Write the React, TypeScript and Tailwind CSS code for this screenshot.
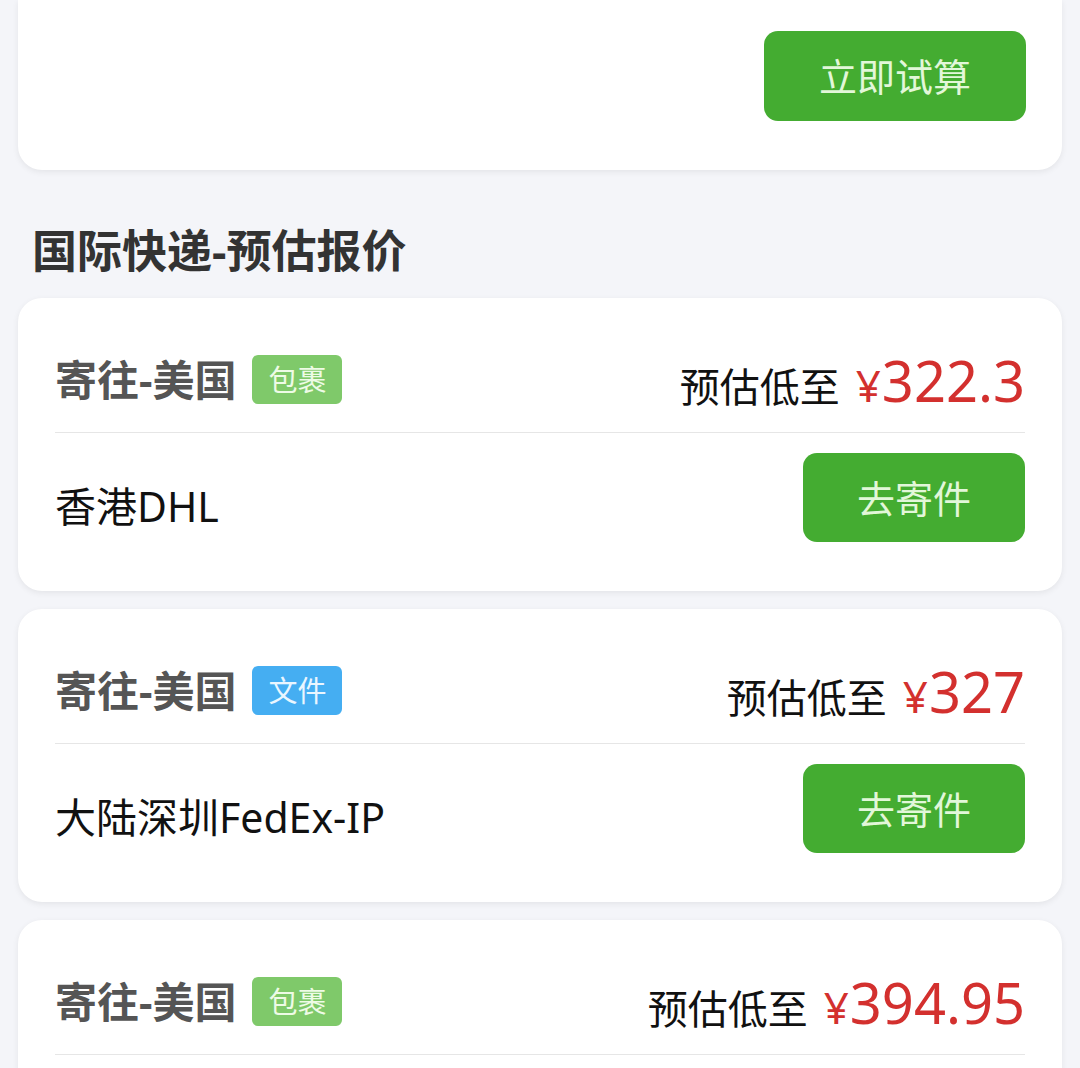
import React from "react";

const FONT = { fontFamily: '"Noto Sans", "Noto Sans CJK SC", sans-serif' };

type Quote = {
  tag: string;
  tagClass: string;
  price: string;
  carrier?: string;
};

const quotes: Quote[] = [
  { tag: "包裹", tagClass: "bg-[#7fc96a] text-[#eefbe6]", price: "322.3", carrier: "香港DHL" },
  { tag: "文件", tagClass: "bg-[#45aef2] text-[#eaf6ff]", price: "327", carrier: "大陆深圳FedEx-IP" },
  { tag: "包裹", tagClass: "bg-[#7fc96a] text-[#eefbe6]", price: "394.95" },
];

function QuoteCard({ q }: { q: Quote }) {
  return (
    <div className="mx-[18px] rounded-[24px] bg-white px-[37px] pt-[29px] pb-[49px] shadow-[0_2px_6px_rgba(0,0,0,0.07)]">
      <div className="flex h-[106px] items-center justify-between border-b border-[#e6e6e6]">
        <div className="flex items-center gap-[16px]">
          <span className="text-[42px] font-bold leading-none text-[#555555]">寄往-美国</span>
          <span className={`flex h-[49px] w-[90px] items-center justify-center rounded-[6px] text-[29px] leading-none ${q.tagClass}`}>
            {q.tag}
          </span>
        </div>
        <div className="flex items-baseline leading-none">
          <span className="text-[40px] text-[#111111]">预估低至</span>
          <span className="ml-[16px] mr-[1px] text-[44px] text-[#d3302e]">¥</span>
          <span className="text-[56px] text-[#d3302e]">{q.price}</span>
        </div>
      </div>
      {q.carrier && (
        <div className="flex items-center justify-between pt-[20px]">
          <span className="mt-[18px] text-[41px] leading-none text-[#111111]">{q.carrier}</span>
          <button className="flex h-[89px] w-[222px] items-center justify-center rounded-[14px] bg-[#44ac31] text-[38px] leading-none text-[#e2f7d9]">
            去寄件
          </button>
        </div>
      )}
    </div>
  );
}

export default function App() {
  return (
    <div className="h-[1068px] w-[1080px] overflow-hidden bg-[#f4f5f9]" style={FONT}>
      <div className="mx-[18px] flex h-[170px] justify-end rounded-b-[24px] bg-white px-[36px] pt-[31px] shadow-[0_2px_6px_rgba(0,0,0,0.07)]">
        <button className="flex h-[90px] w-[262px] items-center justify-center rounded-[14px] bg-[#44ac31] text-[38px] leading-none text-[#e2f7d9]">
          立即试算
        </button>
      </div>
      <h2 className="mt-[58px] mb-[25px] pl-[32px] text-[45px] font-bold leading-[45px] text-[#333333]">
        国际快递-预估报价
      </h2>
      <div className="flex flex-col gap-[18px]">
        {quotes.map((q, i) => (
          <QuoteCard key={i} q={q} />
        ))}
      </div>
    </div>
  );
}
